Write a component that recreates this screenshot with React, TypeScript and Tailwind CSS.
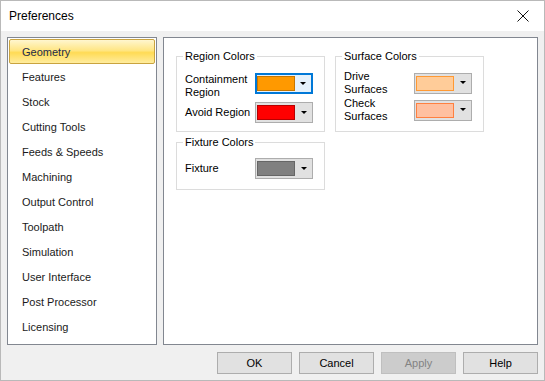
import React from 'react';

const pages = [
  'Geometry',
  'Features',
  'Stock',
  'Cutting Tools',
  'Feeds & Speeds',
  'Machining',
  'Output Control',
  'Toolpath',
  'Simulation',
  'User Interface',
  'Post Processor',
  'Licensing',
];

function ColorPicker({ fill, edge, focused }: { fill: string; edge: string; focused?: boolean }) {
  return (
    <div
      className={
        focused
          ? 'w-[58px] h-[21px] flex items-center border-2 border-[#0078d7] bg-[#e5f1fb] pl-0'
          : 'w-[58px] h-[21px] flex items-center border border-[#adadad] bg-[#e1e1e1] pl-[1px]'
      }
    >
      <div className="w-[38px] h-[15px] border" style={{ backgroundColor: fill, borderColor: edge }} />
      <div className="flex-1 flex justify-center">
        <svg width="6" height="4" viewBox="0 0 6 4">
          <path d="M0 0h6L3 3z" fill="#000" />
        </svg>
      </div>
    </div>
  );
}

function Group({ title, className, children }: { title: string; className: string; children: React.ReactNode }) {
  return (
    <fieldset className={`border border-[#dcdcdc] pl-[8px] pr-[8px] ${className}`}>
      <legend className="ml-[-2px] px-[2px] leading-[13px] text-black">{title}</legend>
      {children}
    </fieldset>
  );
}

export default function App() {
  return (
    <div className="w-[545px] h-[381px] flex flex-col border border-[#b9b9b9] bg-[#f0f0f0] text-[11px] text-black font-['Liberation_Sans',Arial,sans-serif]">
      <div className="h-[30px] bg-white flex items-center justify-between pl-[8px] pr-[15px]">
        <span className="text-[12px]">Preferences</span>
        <svg width="12" height="12" viewBox="0 0 12 12">
          <path d="M0.5 0.5L11.5 11.5M11.5 0.5L0.5 11.5" stroke="#111" strokeWidth="1" />
        </svg>
      </div>

      <div className="flex-1 flex flex-col px-[6px] pt-[6px]">
        <div className="flex gap-[6px] h-[308px]">
          <div className="w-[150px] border border-[#828790] bg-white p-[1px] flex flex-col">
            {pages.map((p, i) => (
              <div
                key={p}
                className={
                  i === 0
                    ? 'h-[25px] flex items-center pl-[12px] pt-[2px] border border-[#c9a33f] rounded-[2px] text-[#1c2a4a] bg-[linear-gradient(to_bottom,#fff6cf,#ffe685_45%,#ffdb55_55%,#ffec9e)]'
                    : 'h-[25px] flex items-center pl-[12px] pt-[2px] border border-transparent text-[#1a1a1a]'
                }
              >
                {p}
              </div>
            ))}
          </div>

          <div className="flex-1 border border-[#828790] bg-white pl-[12px] pt-[12px] flex flex-col">
            <div className="flex gap-[10px]">
              <Group title="Region Colors" className="w-[149px] h-[82px] pt-[10px]">
                <div className="flex items-start">
                  <div className="w-[70px] leading-[13px]">
                    Containment
                    <br />
                    Region
                  </div>
                  <ColorPicker fill="#ff9900" edge="#c77600" focused />
                </div>
                <div className="flex items-center mt-[3px]">
                  <div className="w-[70px] leading-[13px]">Avoid Region</div>
                  <ColorPicker fill="#ff0000" edge="#b80000" />
                </div>
              </Group>
              <Group title="Surface Colors" className="w-[149px] h-[82px] pt-[7px]">
                <div className="flex items-center">
                  <div className="w-[70px] leading-[13px]">
                    Drive
                    <br />
                    Surfaces
                  </div>
                  <ColorPicker fill="#ffcc99" edge="#ff9933" />
                </div>
                <div className="flex items-center mt-[1px]">
                  <div className="w-[70px] leading-[13px]">
                    Check
                    <br />
                    Surfaces
                  </div>
                  <ColorPicker fill="#ffc0a0" edge="#ff8040" />
                </div>
              </Group>
            </div>
            <Group title="Fixture Colors" className="w-[149px] h-[54px] mt-[4px] pt-[9px]">
              <div className="flex items-center">
                <div className="w-[70px] leading-[13px]">Fixture</div>
                <ColorPicker fill="#808080" edge="#666666" />
              </div>
            </Group>
          </div>
        </div>

        <div className="mt-[7px] flex justify-end gap-[7px]">
          {['OK', 'Cancel', 'Apply', 'Help'].map((b) => (
            <div
              key={b}
              className={
                b === 'Apply'
                  ? 'w-[75px] h-[22px] flex items-center justify-center border border-[#bfbfbf] bg-[#cccccc] text-[#838383]'
                  : 'w-[75px] h-[22px] flex items-center justify-center border border-[#adadad] bg-[#e1e1e1]'
              }
            >
              {b}
            </div>
          ))}
        </div>
      </div>
    </div>
  );
}
